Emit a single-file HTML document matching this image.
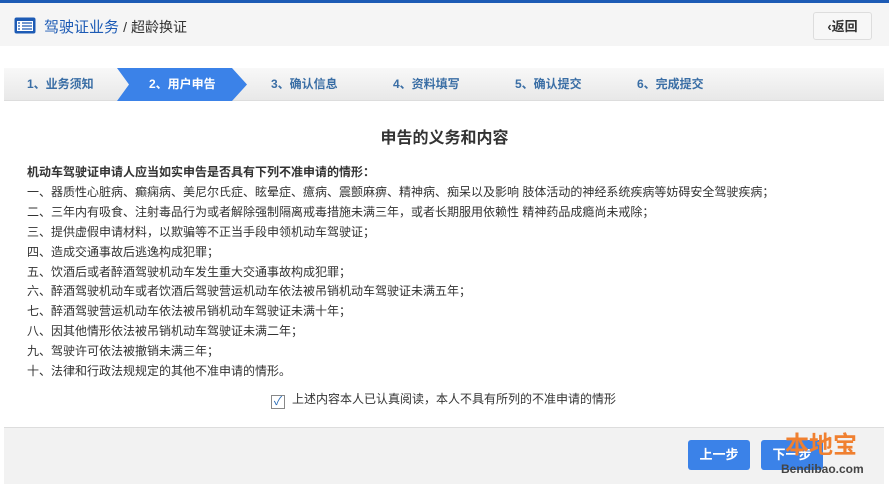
<!DOCTYPE html><html><head><meta charset="utf-8"><style>
body{margin:0;width:889px;height:483px;overflow:hidden;background:#fff;font-family:"Liberation Sans","Noto Sans CJK SC",sans-serif;position:relative}
.top{position:absolute;left:0;top:0;width:889px;height:3px;background:#1d5bb5}
.hd{position:absolute;left:0;top:3px;width:889px;height:43px;background:#f5f5f5}
.hd .t{position:absolute;left:44px;top:13px;font-size:15px;color:#1d5bb5}
.hd .t span{color:#333;font-size:14px}
.back{position:absolute;left:813px;top:9px;width:59px;height:28px;border:1px solid #ddd;border-radius:3px;background:#f7f7f7;font-size:13px;font-weight:bold;color:#333;line-height:28px;text-align:center;box-sizing:border-box}
.steps{position:absolute;left:4px;top:68px;width:880px;height:32px;background:linear-gradient(#f8f8f8,#e8e8e8);border-bottom:1px solid #ddd}
.s{position:absolute;top:68px;height:32px;line-height:32px;font-size:12px;font-weight:bold;color:#3a6ea5}
.act{position:absolute;left:117px;top:68px;width:130px;height:33px;background:#3b82e8;clip-path:polygon(0 0,115px 0,130px 50%,115px 100%,0 100%,12px 50%)}
h2{position:absolute;top:124px;left:0;width:889px;text-align:center;font-size:16px;font-weight:bold;color:#333;margin:0}
.txt{position:absolute;left:27px;top:163px;font-size:12px;color:#333;line-height:19.9px}
.chk{position:absolute;left:271px;top:390px;font-size:12px;color:#333}
.chk i{display:inline-block;width:12px;height:12px;border:1px solid #888;background:#fff;vertical-align:-2px;margin-right:7px;position:relative;font-style:normal;font-size:12px;line-height:11px;color:#2a6bb5;text-align:center}
.ft{position:absolute;left:4px;top:427px;width:880px;height:56px;background:#f2f2f2;border-top:1px solid #ddd}
.b{position:absolute;top:440px;width:62px;height:30px;background:#3b82e8;border-radius:3px;color:#fff;font-size:13px;line-height:30px;text-align:center;font-weight:bold}
</style></head><body>
<div class="top"></div>
<div class="hd"><svg style="position:absolute;left:14px;top:14px" width="22" height="17"><rect x="0.5" y="0.5" width="21" height="16" rx="2" fill="#1d5bb5"/><rect x="3" y="4" width="16" height="10" fill="#fff"/><path d="M4 6h2M8 6h10M4 9h2M8 9h10M4 12h2M8 12h10" stroke="#1d5bb5" stroke-width="1.3"/></svg><div class="t">驾驶证业务 <span>/ 超龄换证</span></div><div class="back">‹返回</div></div>
<div class="steps"></div>
<div class="act"></div>
<div class="s" style="left:27px">1、业务须知</div>
<div class="s" style="left:149px;color:#fff">2、用户申告</div>
<div class="s" style="left:271px">3、确认信息</div>
<div class="s" style="left:393px">4、资料填写</div>
<div class="s" style="left:515px">5、确认提交</div>
<div class="s" style="left:637px">6、完成提交</div>
<h2>申告的义务和内容</h2>
<div class="txt"><b>机动车驾驶证申请人应当如实申告是否具有下列不准申请的情形：</b><br>一、器质性心脏病、癫痫病、美尼尔氏症、眩晕症、癔病、震颤麻痹、精神病、痴呆以及影响 肢体活动的神经系统疾病等妨碍安全驾驶疾病；<br>二、三年内有吸食、注射毒品行为或者解除强制隔离戒毒措施未满三年，或者长期服用依赖性 精神药品成瘾尚未戒除；<br>三、提供虚假申请材料，以欺骗等不正当手段申领机动车驾驶证；<br>四、造成交通事故后逃逸构成犯罪；<br>五、饮酒后或者醉酒驾驶机动车发生重大交通事故构成犯罪；<br>六、醉酒驾驶机动车或者饮酒后驾驶营运机动车依法被吊销机动车驾驶证未满五年；<br>七、醉酒驾驶营运机动车依法被吊销机动车驾驶证未满十年；<br>八、因其他情形依法被吊销机动车驾驶证未满二年；<br>九、驾驶许可依法被撤销未满三年；<br>十、法律和行政法规规定的其他不准申请的情形。</div>
<div class="chk"><i>✓</i>上述内容本人已认真阅读，本人不具有所列的不准申请的情形</div>
<div class="ft"></div>
<div class="b" style="left:688px">上一步</div>
<div class="b" style="left:761px">下一步</div>
<div style="position:absolute;left:785px;top:425px;font-size:24px;font-weight:bold;color:#f08030">本地宝</div>
<div style="position:absolute;left:781px;top:462px;font-size:12px;font-weight:bold;color:#444">Bendibao.com</div>
</body></html>
